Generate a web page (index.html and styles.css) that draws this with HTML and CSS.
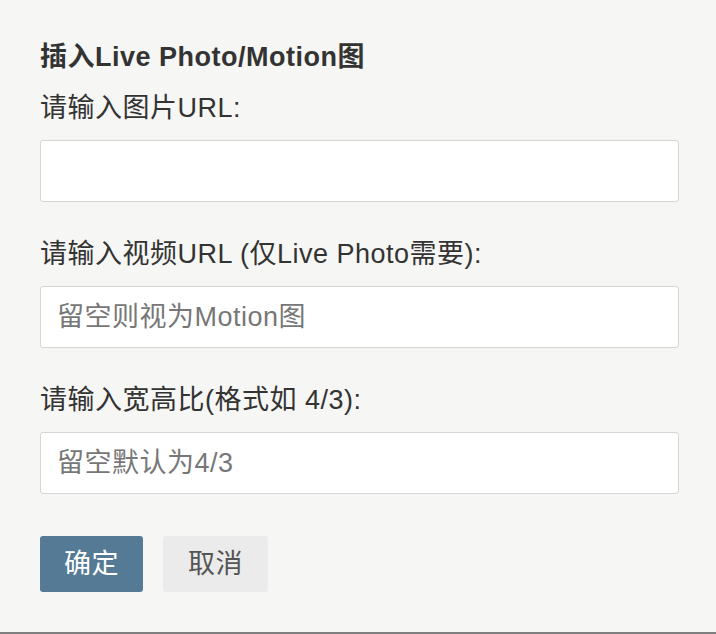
FILE: index.html
```html
<!DOCTYPE html>
<html lang="zh-CN">
<head>
<meta charset="utf-8">
<title>插入Live Photo/Motion图</title>
<link rel="stylesheet" href="styles.css">
</head>
<body>
<div class="dialog">
  <h3 class="title">插入Live Photo/Motion图</h3>
  <label class="label label-first">请输入图片URL:</label>
  <input class="field" type="text">
  <label class="label">请输入视频URL (仅Live Photo需要):</label>
  <input class="field" type="text" placeholder="留空则视为Motion图">
  <label class="label">请输入宽高比(格式如 4/3):</label>
  <input class="field" type="text" placeholder="留空默认为4/3">
  <div class="actions">
    <button class="btn btn-primary">确定</button>
    <button class="btn btn-secondary">取消</button>
  </div>
</div>
</body>
</html>
```
FILE: styles.css
```css
html, body {
  margin: 0;
  padding: 0;
  background: #f6f6f4;
}

.dialog {
  box-sizing: border-box;
  height: 634px;
  padding: 39px 0 0 40px;
  border-bottom: 2px solid #7f7f7f;
  display: flex;
  flex-direction: column;
  align-items: flex-start;
  font-family: "Liberation Sans", "Noto Sans CJK SC", sans-serif;
  font-size: 27px;
  letter-spacing: 0.5px;
  color: #333;
}

.title {
  margin: 0;
  font-size: 27px;
  font-weight: bold;
  line-height: 36px;
  color: #333;
}

.label {
  display: block;
  line-height: 36px;
  margin-top: 34px;
  color: #333;
}

.label-first {
  margin-top: 15px;
}

.field {
  box-sizing: border-box;
  width: 639px;
  height: 62px;
  margin: 14px 0 0 0;
  padding: 0 16px;
  border: 1px solid #d6d6d6;
  border-radius: 3px;
  background: #fff;
  font-family: inherit;
  font-size: 27px;
  letter-spacing: 0.5px;
  color: #333;
  outline: none;
}

.field::placeholder {
  color: #777;
}

.actions {
  display: flex;
  gap: 20px;
  margin-top: 42px;
}

.btn {
  box-sizing: border-box;
  height: 56px;
  padding: 0;
  border: none;
  border-radius: 3px;
  font-family: inherit;
  font-size: 27px;
  letter-spacing: 0.5px;
  line-height: 56px;
  text-align: center;
}

.btn-primary {
  width: 103px;
  background: #557a95;
  color: #fff;
}

.btn-secondary {
  width: 105px;
  background: #ebebeb;
  color: #555;
}
```
